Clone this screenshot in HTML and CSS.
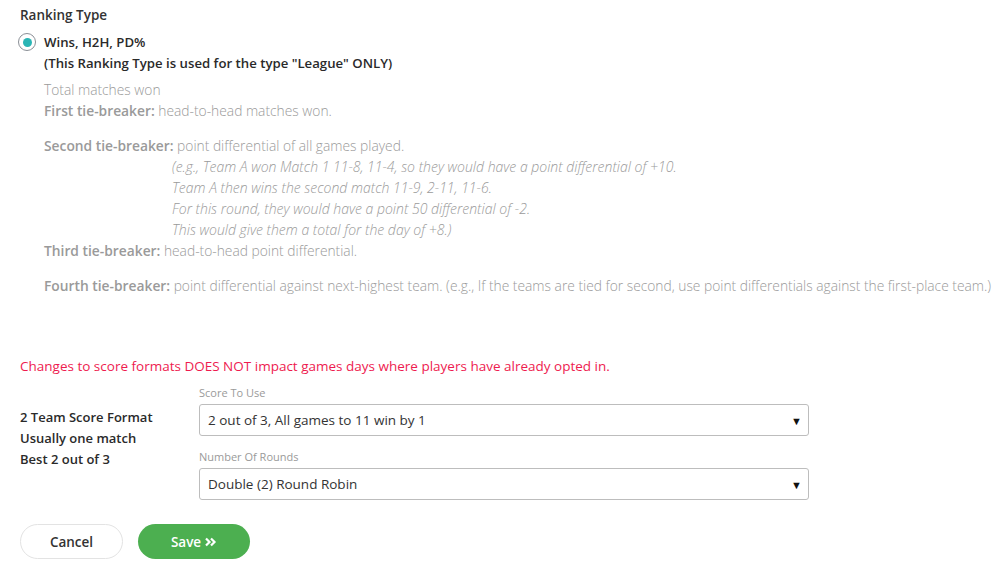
FILE: index.html
```html
<!DOCTYPE html>
<html>
<head>
<meta charset="utf-8">
<link rel="stylesheet" href="styles.css">
</head>
<body>
<div class="page">
  <div class="section-title">Ranking Type</div>
  <div class="radio-row">
    <span class="radio"><span class="dot"></span></span>
    <div class="radio-text">
      <div>Wins, H2H, PD%</div>
      <div>(This Ranking Type is used for the type "League" ONLY)</div>
    </div>
  </div>
  <div class="rules">
    <div class="line">Total matches won</div>
    <div class="line"><b>First tie-breaker:</b> head-to-head matches won.</div>
    <div class="gap"></div>
    <div class="line"><b>Second tie-breaker:</b> point differential of all games played.</div>
    <div class="example">
      <div class="line">(e.g., Team A won Match 1 11-8, 11-4, so they would have a point differential of +10.</div>
      <div class="line">Team A then wins the second match 11-9, 2-11, 11-6.</div>
      <div class="line">For this round, they would have a point 50 differential of -2.</div>
      <div class="line">This would give them a total for the day of +8.)</div>
    </div>
    <div class="line"><b>Third tie-breaker:</b> head-to-head point differential.</div>
    <div class="gap"></div>
    <div class="line"><b>Fourth tie-breaker:</b> point differential against next-highest team. (e.g., If the teams are tied for second, use point differentials against the first-place team.)</div>
  </div>

  <div class="warning">Changes to score formats DOES NOT impact games days where players have already opted in.</div>

  <div class="format">
    <div class="format-desc">
      <div>2 Team Score Format</div>
      <div>Usually one match</div>
      <div>Best 2 out of 3</div>
    </div>
    <div class="fields">
      <div class="field">
        <div class="field-label">Score To Use</div>
        <div class="select"><span>2 out of 3, All games to 11 win by 1</span><span class="caret">&#9660;</span></div>
      </div>
      <div class="field">
        <div class="field-label">Number Of Rounds</div>
        <div class="select"><span>Double (2) Round Robin</span><span class="caret">&#9660;</span></div>
      </div>
    </div>
  </div>

  <div class="actions">
    <button class="btn btn-cancel">Cancel</button>
    <button class="btn btn-save">Save <svg class="chev" width="12" height="10" viewBox="0 0 12 10"><path d="M1 1.5 L4.5 5 L1 8.5 M6 1.5 L9.5 5 L6 8.5" fill="none" stroke="#fff" stroke-width="2.2"/></svg></button>
  </div>
</div>
</body>
</html>
```
FILE: styles.css
```css
html, body {
  margin: 0;
  padding: 0;
  background: #fff;
}
body {
  font-family: "Open Sans", "Noto Sans", sans-serif;
  font-size: 13.5px;
  color: #222;
}
.page {
  padding: 5px 20px 0 20px;
}
.section-title {
  font-weight: 600;
  line-height: 20px;
  color: #333;
}
.radio-row {
  display: flex;
  align-items: flex-start;
  margin-top: 7px;
  margin-left: -2px;
}
.radio {
  width: 16px;
  height: 16px;
  border: 1.5px solid #8a8f96;
  border-radius: 50%;
  display: flex;
  align-items: center;
  justify-content: center;
  margin-top: 1px;
  margin-right: 8px;
  flex: none;
}
.dot {
  width: 9px;
  height: 9px;
  background: #2bb5b5;
  border-radius: 50%;
}
.radio-text {
  font-weight: 600;
  line-height: 21px;
  color: #2a2a2a;
  font-size: 13.2px;
}
.rules {
  margin-left: 24px;
  margin-top: 5px;
  color: #9a9a9a;
  font-weight: 300;
  font-size: 13.8px;
}
.rules b {
  font-weight: 600;
}
.line {
  line-height: 21px;
  white-space: nowrap;
}
.gap {
  height: 14px;
}
.example {
  padding-left: 128px;
  font-style: italic;
  font-size: 14px;
  line-height: 21px;
}
.warning {
  margin-top: 60px;
  color: #ee1b4f;
  font-weight: 400;
  line-height: 20px;
}
.format {
  display: flex;
  margin-top: 10px;
}
.format-desc {
  width: 179px;
  padding-top: 21px;
  font-weight: 600;
  line-height: 21px;
  color: #2a2a2a;
  font-size: 13px;
}
.fields {
  display: flex;
  flex-direction: column;
  gap: 14px;
  width: 610px;
}
.field-label {
  font-size: 11px;
  color: #9a9a9a;
  line-height: 14px;
  margin-bottom: 4px;
}
.select {
  height: 32px;
  box-sizing: border-box;
  border: 1px solid #bdbdbd;
  border-radius: 3px;
  display: flex;
  align-items: center;
  justify-content: space-between;
  padding: 0 6px 0 8px;
  color: #333;
}
.caret {
  font-size: 11px;
  color: #111;
}
.actions {
  display: flex;
  gap: 15px;
  margin-top: 24px;
}
.btn {
  height: 35px;
  border-radius: 18px;
  font-family: "Open Sans", "Noto Sans", sans-serif;
  font-size: 13.5px;
  font-weight: 600;
  cursor: pointer;
}
.btn-cancel {
  width: 103px;
  background: #fff;
  border: 1px solid #e3e3e3;
  color: #333;
}
.btn-save {
  width: 112px;
  background: #4caf50;
  border: none;
  color: #fff;
  display: flex;
  align-items: center;
  justify-content: center;
  gap: 4px;
}
.chev {
  margin-top: 1px;
}
```
